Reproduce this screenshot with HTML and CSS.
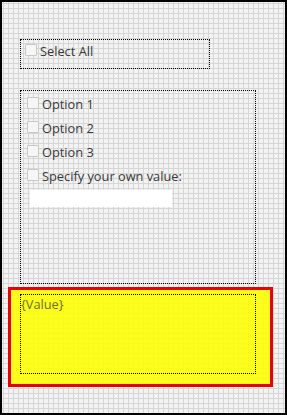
FILE: index.html
```html
<!DOCTYPE html>
<html>
<head>
<meta charset="utf-8">
<link rel="stylesheet" href="styles.css">
</head>
<body>
<div class="page">
  <div class="select-all">
    <label class="row row-sa"><span class="cb"></span><span class="lbl">Select All</span></label>
  </div>
  <div class="options">
    <label class="row"><span class="cb"></span><span class="lbl">Option 1</span></label>
    <label class="row"><span class="cb"></span><span class="lbl">Option 2</span></label>
    <label class="row"><span class="cb"></span><span class="lbl">Option 3</span></label>
    <label class="row"><span class="cb"></span><span class="lbl">Specify your own value:</span></label>
    <div class="own-input"></div>
  </div>
  <div class="result">
    <div class="result-inner"><span class="value">{Value}</span></div>
  </div>
</div>
</body>
</html>
```
FILE: styles.css
```css
html, body {
  margin: 0;
  padding: 0;
}
body {
  font-family: "Open Sans", "Noto Sans", sans-serif;
  font-size: 12.8px;
  color: #383838;
}
.page {
  box-sizing: border-box;
  width: 287px;
  height: 415px;
  border: 2px solid #000;
  background-color: #f3f3f3;
  background-image:
    linear-gradient(to right, #d6d6d6 1px, transparent 1px),
    linear-gradient(to bottom, #d6d6d6 1px, transparent 1px);
  background-size: 5px 5px;
  background-position: 1px 1px;
  padding: 37px 0 0 6px;
  display: flex;
  flex-direction: column;
  align-items: flex-start;
}
.select-all {
  box-sizing: border-box;
  margin-left: 12px;
  width: 190px;
  height: 30px;
  border: 1px dotted #000;
  padding: 0 0 0 4px;
}
.row {
  display: flex;
  align-items: center;
  height: 24px;
  gap: 3px;
}
.row-sa {
  height: 20px;
}
.cb {
  box-sizing: border-box;
  width: 12px;
  height: 12px;
  border: 1px solid #c8c8c8;
  border-radius: 1px;
  background: #f6f6f6;
  flex: none;
}
.lbl {
  white-space: nowrap;
  line-height: 16px;
  padding-top: 1px;
}
.options {
  box-sizing: border-box;
  margin: 21px 0 0 12px;
  width: 236px;
  height: 194px;
  border: 1px dotted #000;
  padding: 0 0 0 6px;
}
.own-input {
  margin: 3px 0 0 3px;
  width: 142px;
  height: 17px;
  background: #fff;
}
.result {
  box-sizing: border-box;
  margin-top: 3px;
  width: 265px;
  height: 100px;
  border: 3px solid #e80000;
  background: rgba(255, 255, 0, 0.88);
  padding: 4px 0 0 9px;
}
.result-inner {
  box-sizing: border-box;
  width: 236px;
  height: 80px;
  border: 1px dotted #000;
  padding: 0;
}
.value {
  color: #6e6e30;
  line-height: 16px;
}
```
